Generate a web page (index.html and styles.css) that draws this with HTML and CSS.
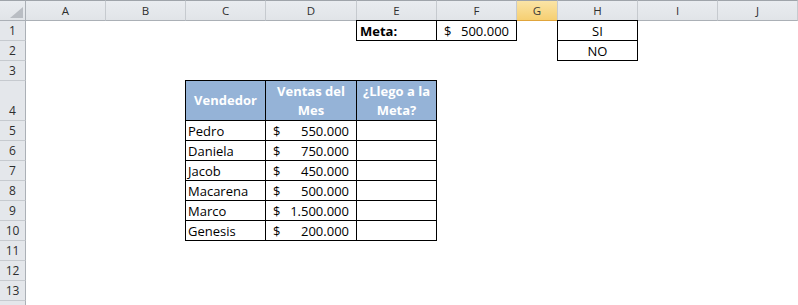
FILE: index.html
```html
<!DOCTYPE html>
<html lang="es">
<head>
<meta charset="utf-8">
<title>Hoja</title>
<link rel="stylesheet" href="styles.css">
</head>
<body>
<div class="sheet">
  <div class="ch corner"><svg width="13" height="11" viewBox="0 0 13 11"><polygon points="13,0 13,11 0,11" fill="#b9bdc3"/></svg></div>
  <div class="ch">A</div>
  <div class="ch">B</div>
  <div class="ch">C</div>
  <div class="ch">D</div>
  <div class="ch">E</div>
  <div class="ch">F</div>
  <div class="ch sel">G</div>
  <div class="ch">H</div>
  <div class="ch">I</div>
  <div class="ch">J</div>

  <div class="rh">1</div>
  <div class="cell bx bold c-E">Meta:</div>
  <div class="cell bx acct c-F"><span>$</span><span>500.000</span></div>
  <div class="cell bx center c-H">SI</div>

  <div class="rh">2</div>
  <div class="cell bx center c-H">NO</div>

  <div class="rh">3</div>

  <div class="rh">4</div>
  <div class="cell bx th c-C">Vendedor</div>
  <div class="cell bx th c-D">Ventas del Mes</div>
  <div class="cell bx th c-E">¿Llego a la Meta?</div>

  <div class="rh">5</div>
  <div class="cell bx c-C">Pedro</div>
  <div class="cell bx acct c-D"><span>$</span><span>550.000</span></div>
  <div class="cell bx c-E"></div>

  <div class="rh">6</div>
  <div class="cell bx c-C">Daniela</div>
  <div class="cell bx acct c-D"><span>$</span><span>750.000</span></div>
  <div class="cell bx c-E"></div>

  <div class="rh">7</div>
  <div class="cell bx c-C">Jacob</div>
  <div class="cell bx acct c-D"><span>$</span><span>450.000</span></div>
  <div class="cell bx c-E"></div>

  <div class="rh">8</div>
  <div class="cell bx c-C">Macarena</div>
  <div class="cell bx acct c-D"><span>$</span><span>500.000</span></div>
  <div class="cell bx c-E"></div>

  <div class="rh">9</div>
  <div class="cell bx c-C">Marco</div>
  <div class="cell bx acct c-D"><span>$</span><span>1.500.000</span></div>
  <div class="cell bx c-E"></div>

  <div class="rh">10</div>
  <div class="cell bx c-C">Genesis</div>
  <div class="cell bx acct c-D"><span>$</span><span>200.000</span></div>
  <div class="cell bx c-E"></div>

  <div class="rh">11</div>
  <div class="rh">12</div>
  <div class="rh">13</div>
  <div class="rh"></div>
</div>
</body>
</html>
```

FILE: styles.css
```css
html, body {
  margin: 0;
  padding: 0;
  background: #ffffff;
  overflow: hidden;
}

body {
  font-family: "Open Sans", "Noto Sans", sans-serif;
  color: #000;
}

.sheet {
  display: grid;
  grid-template-columns: 26px 80px 80px 80px 91px 80px 80px 41px 80px 80px 80px;
  grid-template-rows: 21px 20px 20px 20px 40px repeat(10, 20px);
  width: 798px;
}

.ch {
  box-sizing: border-box;
  background: linear-gradient(#e9ecf0, #e1e4e8);
  border-top: 1px solid #9fa4aa;
  border-right: 1px solid #c6cacf;
  border-bottom: 1px solid #abb0b6;
  font-size: 11.5px;
  line-height: 1;
  color: #2e2e2e;
  display: flex;
  align-items: center;
  justify-content: center;
  padding-top: 1px;
}

.corner {
  justify-content: flex-end;
  align-items: flex-end;
  padding: 0 2px 2px 0;
  border-right-color: #abb0b6;
}

.corner svg {
  display: block;
}

.sel {
  background: linear-gradient(#fae4a6, #f6cf72);
  border-bottom-color: #e0a53c;
  color: #3a3a3a;
}

.rh {
  grid-column: 1;
  box-sizing: border-box;
  background: #e4e7eb;
  border-right: 1px solid #abb0b6;
  border-bottom: 1px solid #c6cacf;
  font-size: 12px;
  line-height: 14px;
  color: #2e2e2e;
  display: flex;
  align-items: flex-end;
  justify-content: center;
  padding-bottom: 2px;
}

.cell {
  font-size: 13px;
  line-height: 15px;
  display: flex;
  align-items: flex-end;
  padding: 0 2px 1px 2px;
  white-space: nowrap;
  overflow: hidden;
}

.bx {
  margin: 0 1px 1px 0;
  box-shadow: 0 0 0 1px #000;
}

.c-C { grid-column: 4; }
.c-D { grid-column: 5; }
.c-E { grid-column: 6; }
.c-F { grid-column: 7; }
.c-H { grid-column: 9; }

.bold {
  font-weight: 700;
  padding-left: 3px;
}

.center {
  justify-content: center;
}

.acct {
  justify-content: space-between;
  padding: 0 7px 1px 7px;
}

.th {
  background: #95b3d7;
  color: #ffffff;
  font-weight: 700;
  white-space: normal;
  text-align: center;
  justify-content: center;
  align-items: center;
  line-height: 19px;
  padding: 0 4px;
}
```
